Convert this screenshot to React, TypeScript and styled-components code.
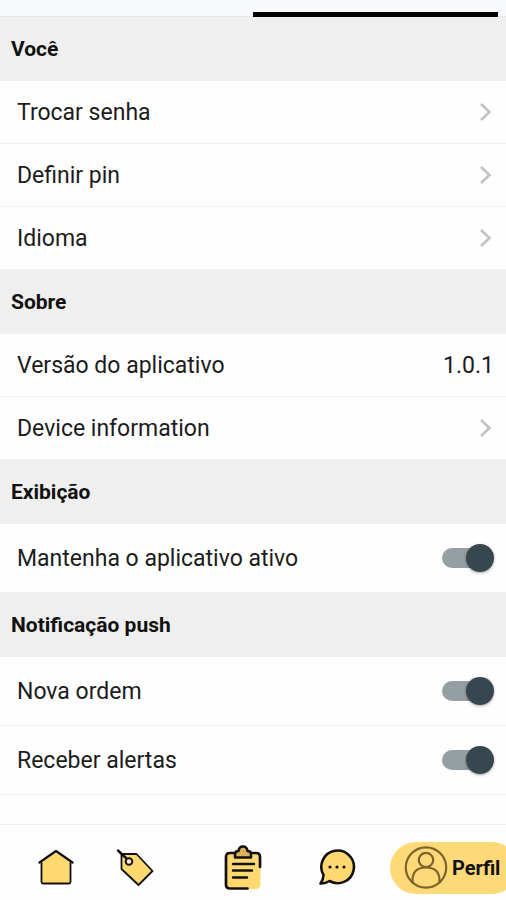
import React from "react";
import styled, { createGlobalStyle } from "styled-components";

const GlobalStyle = createGlobalStyle`
  *, *::before, *::after { box-sizing: border-box; }
  body { margin: 0; background: #fefefe; font-family: Roboto, sans-serif; color: #111; }
`;

const Page = styled.div`
  min-height: 100vh;
  display: flex;
  flex-direction: column;
`;

const TabStrip = styled.div`
  height: 17px;
  padding: 0 8px;
  display: grid;
  grid-template-columns: 1fr 1fr;
  background: #f7f8f9;
  border-bottom: 1px solid #e6e7e7;
`;

const TabEdge = styled.div<{ $active?: boolean }>`
  height: 17px;
  border-bottom: 5px solid ${(p) => (p.$active ? "#000" : "transparent")};
`;

const Content = styled.main`
  flex: 1;
`;

const SectionTitle = styled.h2`
  margin: 0;
  height: 64px;
  padding: 0 11px;
  display: flex;
  align-items: center;
  background: #efefef;
  font-size: 21px;
  line-height: 28px;
  font-weight: 700;
`;

const List = styled.ul`
  margin: 0;
  padding: 0;
  list-style: none;
`;

const Item = styled.li<{ $tall?: boolean }>`
  height: ${(p) => (p.$tall ? 69 : 63)}px;
  display: flex;
  border-bottom: 1px solid #f1f1f1;
`;

const rowLayout = `
  flex: 1;
  display: flex;
  align-items: center;
  justify-content: space-between;
  padding: 0 12px 0 17px;
  font-family: inherit;
  font-size: 23px;
  line-height: 28px;
  color: #1c1c1c;
`;

const RowButton = styled.button`
  ${rowLayout}
  border: 0;
  background: transparent;
  text-align: left;
  cursor: pointer;
`;

const Row = styled.div`
  ${rowLayout}
`;

const SwitchRow = styled.label`
  ${rowLayout}
  cursor: pointer;
`;

const RowText = styled.span`
  padding-top: 2px;
`;

const Switch = styled.input`
  appearance: none;
  margin: 0;
  width: 52px;
  height: 28px;
  display: grid;
  align-items: center;
  cursor: pointer;

  &::before,
  &::after {
    content: "";
    grid-area: 1 / 1;
  }
  &::before {
    width: 46px;
    height: 20px;
    border-radius: 10px;
    background: #c4c8ca;
  }
  &::after {
    width: 28px;
    height: 28px;
    border-radius: 50%;
    background: #eceff1;
    box-shadow: 0 1px 3px rgba(0, 0, 0, 0.35);
  }
  &:checked::before {
    background: #959ea2;
  }
  &:checked::after {
    justify-self: end;
    background: #37474f;
  }
`;

const NavBar = styled.nav`
  height: 76px;
  display: grid;
  grid-template-columns: 80fr 78fr 138fr 50fr 144fr;
  align-items: center;
  padding: 10px 0 0 16px;
  overflow: hidden;
  border-top: 1px solid #eeeeee;
`;

const NavButton = styled.button`
  display: flex;
  justify-content: center;
  padding: 0;
  border: 0;
  background: transparent;
  cursor: pointer;
`;

const ProfileButton = styled.button`
  display: flex;
  align-items: center;
  gap: 4px;
  height: 52px;
  margin: 0 -12px 0 28px;
  padding: 0 0 0 14px;
  border: 0;
  border-radius: 26px;
  background: #fdd978;
  color: #111;
  font-family: inherit;
  font-size: 20px;
  line-height: 24px;
  font-weight: 700;
  cursor: pointer;
`;

const Icon = styled.svg`
  display: block;
  flex: none;
  fill: none;
  stroke: #111;
  stroke-width: 2;
  stroke-linecap: round;
  stroke-linejoin: round;
`;

const Chevron = () => (
  <Icon width="16" height="22" viewBox="0 0 16 22" aria-hidden="true">
    <path d="M3 3 L11.5 11 L3 19" stroke="#c2c2c2" strokeWidth="2.6" strokeLinecap="butt" strokeLinejoin="miter" />
  </Icon>
);

const HomeIcon = () => (
  <Icon width="38" height="38" viewBox="0 0 38 38" aria-hidden="true">
    <path d="M4.5 13.5 V33 Q4.5 34.5 6 34.5 H32 Q33.5 34.5 33.5 33 V13.5 L19 2 Z" fill="#ffd970" stroke="none" />
    <path d="M4.5 14 V33 Q4.5 34.5 6 34.5 H32 Q33.5 34.5 33.5 33 V14" strokeWidth="1.8" />
    <path d="M2.5 13.5 L19 2 L35.5 13.5" strokeWidth="2.2" />
  </Icon>
);

const TagIcon = () => (
  <Icon width="38" height="38" viewBox="0 0 38 38" aria-hidden="true">
    <path d="M5.5 5 L20.5 5 L36.5 22 L22.5 36 L5.5 20 Z" fill="#ffd970" strokeWidth="1.8" />
    <circle cx="13" cy="12.5" r="3.3" fill="#fff3cc" strokeWidth="2" />
    <path d="M2 1.5 L10 9" strokeWidth="2.4" />
  </Icon>
);

const ClipboardIcon = () => (
  <Icon width="40" height="48" viewBox="0 0 40 48" aria-hidden="true">
    <path d="M7 9 H34 Q37.5 9 37.5 12 V40 Q37.5 45 33 45 H7 Q3 45 3 41 V13 Q3 9 7 9 Z" fill="#ffd970" stroke="none" />
    <path d="M12 9 H7 Q3 9 3 13 V40.5 Q3 44.5 7 44.5 H24.5" strokeWidth="2.7" />
    <path d="M29 9 H33 Q37 9 37 13 V23" strokeWidth="2.7" />
    <path d="M12 13.5 V10 Q12 7 15.5 7 Q16 2.5 20 2.5 Q24 2.5 24.5 7 Q28 7 28 10 V13.5 Z" fill="#dfb05a" strokeWidth="2.5" />
    <path d="M10 20 H31 M10 26.5 H29 M10 33.5 H24" strokeWidth="2.5" />
  </Icon>
);

const ChatIcon = () => (
  <Icon width="38" height="38" viewBox="0 0 38 38" aria-hidden="true">
    <path d="M5.5 26 A16.3 16.3 0 1 1 11.5 32 Q7 34.8 2.5 34.5 Q5.3 31 5.5 26 Z" fill="#ffd970" strokeWidth="2.6" />
    <g fill="#111" stroke="none">
      <circle cx="12" cy="18" r="1.6" />
      <circle cx="19" cy="18" r="1.6" />
      <circle cx="26" cy="18" r="1.6" />
    </g>
  </Icon>
);

const ProfileIcon = () => (
  <Icon width="44" height="44" viewBox="0 0 44 44" aria-hidden="true">
    <g stroke="#7d632f" strokeWidth="2.2">
      <circle cx="22" cy="21.5" r="20.2" />
      <circle cx="22" cy="14" r="7.2" />
      <path d="M8.5 36.5 V34.5 Q8.5 21.5 22 21.5 Q35.5 21.5 35.5 34.5 V36.5" />
    </g>
  </Icon>
);

const LinkItem = ({ label }: { label: string }) => (
  <Item>
    <RowButton type="button">
      <RowText>{label}</RowText>
      <Chevron />
    </RowButton>
  </Item>
);

const SwitchItem = ({ label }: { label: string }) => (
  <Item $tall>
    <SwitchRow>
      <RowText>{label}</RowText>
      <Switch type="checkbox" defaultChecked />
    </SwitchRow>
  </Item>
);

export default function App() {
  return (
    <>
      <GlobalStyle />
      <Page>
        <TabStrip>
          <TabEdge />
          <TabEdge $active />
        </TabStrip>
        <Content>
          <SectionTitle>Você</SectionTitle>
          <List>
            <LinkItem label="Trocar senha" />
            <LinkItem label="Definir pin" />
            <LinkItem label="Idioma" />
          </List>
          <SectionTitle>Sobre</SectionTitle>
          <List>
            <Item>
              <Row>
                <RowText>Versão do aplicativo</RowText>
                <RowText>1.0.1</RowText>
              </Row>
            </Item>
            <LinkItem label="Device information" />
          </List>
          <SectionTitle>Exibição</SectionTitle>
          <List>
            <SwitchItem label="Mantenha o aplicativo ativo" />
          </List>
          <SectionTitle>Notificação push</SectionTitle>
          <List>
            <SwitchItem label="Nova ordem" />
            <SwitchItem label="Receber alertas" />
          </List>
        </Content>
        <NavBar>
          <NavButton type="button" aria-label="Início"><HomeIcon /></NavButton>
          <NavButton type="button" aria-label="Ofertas"><TagIcon /></NavButton>
          <NavButton type="button" aria-label="Ordens"><ClipboardIcon /></NavButton>
          <NavButton type="button" aria-label="Mensagens"><ChatIcon /></NavButton>
          <ProfileButton type="button">
            <ProfileIcon />
            Perfil
          </ProfileButton>
        </NavBar>
      </Page>
    </>
  );
}
